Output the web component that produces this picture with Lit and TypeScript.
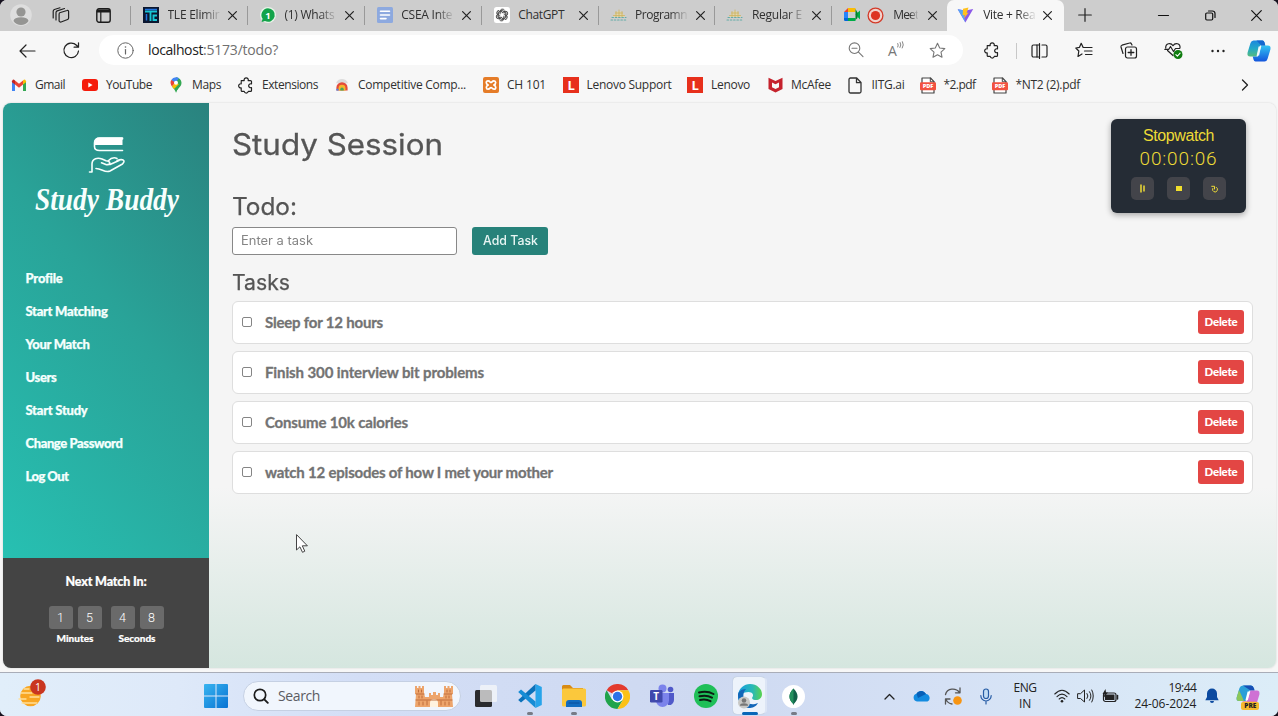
import { LitElement, html, css, svg } from "lit";
import { customElement, property } from "lit/decorators.js";
import { styleMap } from "lit/directives/style-map.js";

/* A one-line label set to a given width, by tracking or by stretching. */
@customElement("fit-label")
class FitLabel extends LitElement {
  @property({ type: Number }) w = 0;
  @property() text = "";
  @property({ type: Boolean }) stretch = false;
  static styles = css`
    :host { display: block; white-space: pre; flex: none; }
    span { display: inline-block; transform-origin: 0 50%; white-space: pre; }
  `;
  firstUpdated() {
    const s = this.renderRoot.querySelector("span") as HTMLElement;
    const natural = s.getBoundingClientRect().width;
    if (!this.w || !natural) return;
    if (this.stretch) s.style.transform = `scaleX(${this.w / natural})`;
    else s.style.letterSpacing = `${(this.w - natural) / this.text.length}px`;
    this.style.width = `${this.w}px`;
  }
  render() { return html`<span>${this.text}</span>`; }
}

const label = (text: string, w: number) => html`<fit-label .text=${text} .w=${w}></fit-label>`;
const wide = (text: string, w: number) => html`<fit-label .text=${text} .w=${w} .stretch=${true}></fit-label>`;
const icon = (w: number, h: number, vb: string, body: unknown) =>
  html`<svg width=${w} height=${h} viewBox=${vb} fill="none" stroke-linecap="round" stroke-linejoin="round">${body}</svg>`;

const puzzle = svg`<path d="M3.2 3.6h3a2.1 2.1 0 1 1 4 0h2.3a1 1 0 0 1 1 1v2.200h-.4a2 2 0 1 0 0 3.900h.4v2.700a1 1 0 0 1-1 1h-2.200a2.1 2.1 0 0 1-4.100 0h-2a1 1 0 0 1-1-1v-2.500a2.1 2.1 0 1 1 0-4.100V4.600" stroke="#222" stroke-width="1.200"/>`;
const cross = icon(9, 9, "0 0 9 9", svg`<path d="M.6.6l7.8 7.8M8.4.6L.6 8.4" stroke="#222" stroke-width="1.2"/>`);
const bridge = icon(18, 12, "0 0 18 12", svg`<path d="M3 8Q9-4 15 8z" fill="#e0d6b0"/><path d="M3.500 6.500h11M5.500 4h7M6 2.500V8M9 1v7M12 2.500V8" stroke="#cdb25f" stroke-width=".8"/><path d="M2 8.500h14M1 11h16" stroke="#63aca8" stroke-width="1.100" stroke-dasharray="1.500 1.800"/>`);
const whats = icon(16, 16, "0 0 16 16", svg`<circle cx="8" cy="8" r="8" fill="#e8f4e9"/><path d="M8 1.2a6.8 6.8 0 1 1-3 12.9L1.6 15l1-3.2A6.8 6.8 0 0 1 8 1.2z" fill="#13a34a"/><text x="8" y="11.6" text-anchor="middle" font-size="9.5" font-weight="700" fill="#fff" font-family="Open Sans, sans-serif">1</text>`);
const tle = icon(16, 16, "0 0 16 16", svg`<path d="M0 0h16v16H0z" fill="#0b1730"/><path d="M2 4.500h5.500V14M7.500 4.500H14M14 8.500h-3.500V13H14" stroke="#18c6d4" stroke-width="1.900" stroke-linecap="butt" stroke-linejoin="miter"/><path d="M2 2.500h12M3.500 7v6.500" stroke="#2374e0" stroke-width="1.500" stroke-linecap="butt"/>`);
const docs = icon(16, 16, "0 0 16 16", svg`<rect width="16" height="16" rx="1.5" fill="#8da9df"/><path d="M3.5 4.2h9M3.5 8h9M3.5 11.6h5.5" stroke="#fff" stroke-width="1.6"/>`);
const gpt = icon(16, 16, "0 0 16 16", svg`<rect width="16" height="16" rx="2.5" fill="#fff"/><g stroke="#444" stroke-width=".95">${[0, 60, 120, 180, 240, 300].map(a => svg`<path transform="rotate(${a} 8 8)" d="M6.1 6.9V4.3a2.4 2.4 0 0 1 4.3-1.3M6.1 5.2l2.7-1.5 3.2 1.9"/>`)}</g>`);
const meet = icon(17, 14, "0 0 17 14", svg`<path d="M0 4l4-4v4z" fill="#ea4335"/><path d="M4 0h7.5v4H4z" fill="#fbbc04"/><path d="M0 4h4v6H0z" fill="#2684fc"/><path d="M0 10h4v3H1.2A1.2 1.2 0 0 1 0 11.8z" fill="#0066da"/><path d="M4 10h7.5v3H4zM11.5 6.5L16 2.5v9z" fill="#00ac47"/><path d="M11.5 1v11l2-2V4.5z" fill="#00832d"/>`);
const rec = icon(17, 17, "0 0 17 17", svg`<circle cx="8.5" cy="8.5" r="7.4" fill="#f1d3cd" stroke="#d33a28" stroke-width="1.3"/><circle cx="8.5" cy="8.5" r="4.6" fill="#dd3422"/>`);
const vite = icon(17, 16, "0 0 17 16", svg`<path d="M.7 2.2L8.4 15.4 16.2 2 8.6 3.4z" fill="#8c59e8"/><path d="M.7 2.2L8.4 15.4 6 3.2z" fill="#57a6f5"/><path d="M11.5.5L6 1.7l-.3 6.6 2-.4-.6 3.4 4.6-5.8-2 .4z" fill="#ffc21e"/>`);

const tabs = [
  { icon: tle, text: "TLE Elimir", w: 52 }, { icon: whats, text: "(1) Whats", w: 50 },
  { icon: docs, text: "CSEA Inte", w: 51 }, { icon: gpt, text: "ChatGPT", w: 46, plain: true },
  { icon: bridge, text: "Programn", w: 52 }, { icon: bridge, text: "Regular E", w: 50 },
];

const lenovo = icon(16, 16, "0 0 16 16", svg`<path d="M0 0h16v16H0z" fill="#e7301c"/><text x="8.2" y="12.6" text-anchor="middle" font-size="13" font-weight="700" fill="#fff" font-family="Open Sans, sans-serif">L</text>`);
const pdf = icon(16, 17, "0 0 16 17", svg`<path d="M2 1h8.5L14 4.6V16H2z" fill="#fff" stroke="#444" stroke-width="1.2"/><path d="M10.3 1v3.8H14" stroke="#444"/><rect x="0" y="5.2" width="16" height="8" rx="1" fill="#f2513f"/><text x="8" y="11.3" text-anchor="middle" font-size="5.6" font-weight="800" fill="#fff" font-family="Open Sans, sans-serif">PDF</text>`);
const bookmarks = [
  { at: 11, t: "Gmail", w: 30, i: icon(16, 12, "0 0 16 12", svg`<path d="M1 2.5V12h3V5z" fill="#4285f4"/><path d="M12 5v7h3V2z" fill="#34a853"/><path d="M4 1.5l4 3.2 4-3.2v4L8 8.7 4 5.5z" fill="#ea4335"/><path d="M1 2.3Q1.7-.6 4 1.5v4L1 3.2z" fill="#c5221f"/><path d="M15 2.3Q14.3-.6 12 1.5v4l3-2.3z" fill="#fbbc04"/>`) },
  { at: 82, t: "YouTube", w: 46, i: icon(16, 12, "0 0 16 12", svg`<rect width="16" height="12" rx="3" fill="#f51b0b"/><path d="M6.3 3.5v5l4.3-2.5z" fill="#fff"/>`) },
  { at: 168, t: "Maps", w: 29, i: icon(16, 16, "0 0 16 16", svg`<path d="M8 .3a5.5 5.5 0 0 1 5.5 5.5C13.5 10 9.500 11 8 15.700Z" fill="#34a853"/><path d="M8 .3A5.500 5.500 0 0 0 3.200 3L7 6.500 11 1.200A5.500 5.500 0 0 0 8 .3z" fill="#4285f4"/><path d="M3.200 3C2 5 2.500 7.500 4 9.500L7.500 5.500z" fill="#ea4335"/><path d="M4 9.500C6 12 7 13 8 15.700c.5-1.700 1-2.700 2-4L13 7 9 6.500z" fill="#34a853"/><path d="M4 9.500L7 6l4 1-5 5z" fill="#fbbc04"/><circle cx="8" cy="5.700" r="2" fill="#fff"/>`) },
  { at: 238, t: "Extensions", w: 56, i: icon(16, 17, "0 0 16 17", puzzle) },
  { at: 334, t: "Competitive Comp...", w: 108, i: icon(14, 14, "0 0 15 14", svg`<path d="M1 5q2-4.500 6.500-4.500T14 5z" fill="#dcdcdc"/><path d="M1.500 13v-3a6 6 0 0 1 12 0v3z" fill="#e44b3b"/><path d="M3.800 13v-2.500a3.700 3.700 0 0 1 7.400 0V13z" fill="#f5b52d"/><path d="M5.700 13v-1.500a1.800 1.800 0 0 1 3.600 0V13z" fill="#49a55e"/><path d="M1.500 11h2.300v2H1.500z" fill="#4d83e6"/>`) },
  { at: 483, t: "CH 101", w: 39, i: icon(16, 16, "0 0 16 16", svg`<rect width="16" height="16" rx="2" fill="#e57c28"/><path d="M5.200 8C2.500 7 2.800 3.800 5 3.800S7 5.500 8 5.500s1-1.700 3-1.700S13.500 7 10.800 8c2.700 1 2.400 4.200.2 4.200S9 10.500 8 10.500s-1 1.700-3 1.700S2.500 9 5.200 8z" stroke="#fff" stroke-width="1.700"/>`) },
  { at: 562.5, t: "Lenovo Support", w: 85, i: lenovo },
  { at: 687, t: "Lenovo", w: 39, i: lenovo },
  { at: 767, t: "McAfee", w: 40, i: icon(15, 16, "0 0 15 16", svg`<path d="M.5.8L7.500 4l7-3.200v11.300L7.500 15.500l-7-3.400z" fill="#c5222d"/><path d="M4 5.500L7.500 7.200 11 5.500v4.800L7.500 12 4 10.300z" fill="#f7f7f7"/>`) },
  { at: 847.5, t: "IITG.ai", w: 33, i: icon(15, 17, "0 0 15 17", svg`<path d="M2.200 1h6.500L13 5.500V14.500A1.500 1.500 0 0 1 11.500 16h-9A1.500 1.500 0 0 1 1 14.500v-12A1.500 1.500 0 0 1 2.500 1zM8.500 1v4.700H13" stroke="#333" stroke-width="1.300"/>`) },
  { at: 919.5, t: "*2.pdf", w: 32, i: pdf },
  { at: 991.5, t: "*NT2 (2).pdf", w: 64.5, i: pdf },
];

const star = "M8.500 1.300l2.200 4.700 5.100.6-3.800 3.500 1 5.100-4.500-2.500L4 15.200l1-5.100L1.200 6.600 6.300 6z";
const copilot = (s: number) => icon(s, s, "0 0 24 24", svg`
  <defs><linearGradient id="ca" x1="0" y1="0" x2="0" y2="1"><stop stop-color="#1b87df"/><stop offset=".5" stop-color="#22a8c8"/><stop offset="1" stop-color="#56bc7e"/></linearGradient>
  <linearGradient id="cb" x1="0" y1="0" x2="0" y2="1"><stop stop-color="#32c4f3"/><stop offset="1" stop-color="#1455dc"/></linearGradient></defs>
  <path d="M6.500 1.500h9q1.500 0 2 2l.8 3h-5.200L9.500 17.500H3.200Q-.3 17.500.6 13.500L3.500 4q.8-2.500 3-2.500z" fill="url(#ca)"/>
  <path d="M17.500 22.500h-9q-1.500 0-2-2l-.8-3h5.200L14.500 6.500h6.300q3.500 0 2.600 4L20.500 20q-.8 2.500-3 2.500z" fill="url(#cb)"/>
  <path d="M6.500 1.500h9q1.500 0 2 2l.8 3h-4L9.500 1.500z" fill="#1467cf"/><path d="M14 7.500h-2.400L9.700 16.500h2.400z" fill="#eff9fb"/>`);

const toolIcons = [
  icon(17, 18, "0 0 17 18", puzzle),
  icon(17, 16, "0 0 17 16", svg`<path d="M6 2H2.500A1.500 1.500 0 0 0 1 3.500v9A1.500 1.500 0 0 0 2.500 14H6zM11 2h3.500A1.500 1.500 0 0 1 16 3.500v9a1.500 1.500 0 0 1-1.500 1.500H11M8.500.5v15" stroke="#222" stroke-width="1.200"/><path d="M6 2h2.500M6 14h2.500" stroke="#222" stroke-width="1.200"/>`),
  icon(18, 17, "0 0 18 17", svg`<path d="M10 5.500L8 5.300 6.200 1.300 4.500 5.300.8 6 3.800 9 3 14.500l4-2.500M6.200 1.300L8.200 5.500M10.500 5.500H17M9.500 9H17M10.500 12.500H17" stroke="#222" stroke-width="1.200"/>`),
  icon(18, 17, "0 0 18 17", svg`<path d="M12 3l-.5-1A1.500 1.500 0 0 0 9.600 1L2 3.200A1.500 1.500 0 0 0 1 5l2 6.500" stroke="#222" stroke-width="1.200"/><rect x="5.500" y="5" width="11" height="11" rx="2" stroke="#222" stroke-width="1.200"/><path d="M11 7.700v5.600M8.200 10.500h5.600" stroke="#222" stroke-width="1.300"/>`),
  icon(19, 18, "0 0 19 18", svg`<path d="M9 13.500L3.500 8.500M1.700 6C1.500 1 7 .500 9 3.700 11 .5 16.500 1 16 6M.8 7.300h4L6.500 4.500l3 5 2-3h4" stroke="#222" stroke-width="1.200"/><circle cx="14" cy="12.500" r="4.500" fill="#107c10"/><path d="M11.900 12.600l1.500 1.500 2.700-2.900" stroke="#fff" stroke-width="1.100"/>`),
  icon(16, 4, "0 0 16 4", svg`<g fill="#222"><circle cx="2.500" cy="2" r="1.200"/><circle cx="8" cy="2" r="1.200"/><circle cx="13.500" cy="2" r="1.200"/></g>`),
];

const taskApps = [
  { i: icon(24, 24, "0 0 24 24", svg`<rect x="1" y="6" width="17" height="17" rx="1.500" fill="#2a2b2e"/><rect x="6" y="1" width="17" height="17" rx="1.500" fill="#fafafa" opacity=".7"/>`) },
  { i: icon(26, 26, "0 0 26 26", svg`<path d="M18.500 1L24.800 4v18l-6.300 3z" fill="#27a4ea"/><path d="M18.500 1v6.500L4 19.500 1.200 17z" fill="#0b71ba"/><path d="M18.500 25v-6.500L4 6.500 1.200 9z" fill="#168cd5"/>`), dot: true },
  { i: icon(26, 24, "0 0 26 24", svg`<path d="M1 2.500A1.500 1.500 0 0 1 2.500 1H9l3 3h10v5H1z" fill="#d88b14"/><rect x="1" y="4.500" width="24" height="18" rx="1.500" fill="#fbc83c"/><path d="M5 23v-4a3 3 0 0 1 3-3h10a3 3 0 0 1 3 3v4z" fill="#126cc0"/><path d="M8 19h10" stroke="#0b4f9a"/>`), dot: true },
  { i: icon(25, 25, "0 0 24 24", svg`<path d="M12 12L1.600 6A12 12 0 0 1 22.400 6H12z" fill="#e33b2e"/><path d="M12 12l-5.200 3L1.600 6A12 12 0 0 0 12 24l5.200-9z" fill="#20a34b"/><path d="M12 6h10.400A12 12 0 0 1 12 24l5.200-9z" fill="#fbc116"/><circle cx="12" cy="12" r="5.700" fill="#fff"/><circle cx="12" cy="12" r="4.500" fill="#2b72e8"/>`) },
  { i: icon(26, 24, "0 0 26 24", svg`<circle cx="21.500" cy="5.500" r="2.800" fill="#5059c9"/><path d="M17 9h8v7a5 5 0 0 1-6 5z" fill="#5059c9"/><circle cx="13.500" cy="4.500" r="4" fill="#7b83eb"/><path d="M7 9h13v7.500a6.500 6.500 0 0 1-13 0z" fill="#7b83eb"/><rect x="1" y="6" width="12.500" height="12.500" rx="1.200" fill="#4049ad"/><text x="7.200" y="15.800" text-anchor="middle" font-size="10" font-weight="700" fill="#fff" font-family="Open Sans, sans-serif">T</text>`) },
  { i: icon(24, 24, "0 0 24 24", svg`<circle cx="12" cy="12" r="12" fill="#1fbf58"/><path d="M5 8.500q8-2.200 14.500 1.500M5.500 12.300q7-1.800 12.500 1.300M6 16q6-1.300 10.500 1.200" stroke="#0c1d13" stroke-width="2"/>`) },
  { i: icon(26, 26, "0 0 26 26", svg`<defs><linearGradient id="eg"><stop stop-color="#169ee0"/><stop offset=".6" stop-color="#29b8b7"/><stop offset="1" stop-color="#59d34c"/></linearGradient></defs><path d="M1 12C2 5 7 1 13 1c7 0 12 5 12 10 0 4-3 6-6 6-3.500 0-4.500-1.500-3.500-3 1.500-2 0-5-4-5C6 9 3 12 1 18z" fill="url(#eg)"/><path d="M1 12c0-3 3-6 8-6-3 3-3 7-2 10 1.500 4 7 7 14 4-2 4-6 5-9 5C5 25 1 19 1 12z" fill="#1266b8"/><circle cx="7" cy="19.500" r="6" fill="#c8c8c6"/><circle cx="7" cy="17.500" r="2.300" fill="#777"/><path d="M3 22.300a4 2 0 0 1 8 0v.5H3z" fill="#777"/>`), active: true },
  { i: icon(23, 23, "0 0 23 23", svg`<circle cx="11.500" cy="11.500" r="11.500" fill="#fff"/><path d="M11.500 3.500q8 8 .3 15.500l-.1 1h-.4l-.1-1Q3.500 11.500 11.500 3.500z" fill="#116149"/><path d="M11.500 3.500v15.500Q3.500 12 11.500 3.500z" fill="#23905e"/>`), dot: true },
];

@customElement("browser-chrome")
class BrowserChrome extends LitElement {
  static styles = css`
    :host { display: block; font: 12px/16px "Open Sans", "Noto Sans", sans-serif; color: #303030; }
    svg { display: block; flex: none; overflow: visible; }
    .strip { display: flex; height: 31px; background: #cdcdcd; }
    .lead { width: 130px; display: flex; align-items: center; padding-left: 10px; box-sizing: border-box; padding-bottom: 1px; }
    .lead svg:nth-child(2) { margin-left: 20px; }
    .lead svg:nth-child(3) { margin-left: 26px; }
    .tab { width: 116.9px; box-sizing: border-box; display: flex; align-items: center; padding-left: 12px; position: relative; padding-bottom: 1px; }
    .tab::before { content: ""; position: absolute; left: 0; top: 6px; width: 1px; height: 19px; background: #999; }
    .tab .glyph { width: 18px; display: flex; justify-content: center; }
    .tab .cap { margin-left: 7.500px; width: 52px; overflow: hidden; }
    .fade { -webkit-mask-image: linear-gradient(90deg, #000 68%, rgba(0,0,0,.1)); mask-image: linear-gradient(90deg, #000 68%, rgba(0,0,0,.1)); }
    .tab > svg { margin-left: 8.500px; }
    .tab.meet .cap { width: 25px; margin-left: 9px; }
    .tab.meet .recbox { margin-left: 6px; }
    .tab.meet > .x { margin-left: 10px; }
    .tab.on { background: #f7f7f7; border-radius: 7px 7px 0 0; width: 117px; padding-left: 9px; margin-left: -1px; }
    .tab.on::before { display: none; }
    .tab.on .cap { margin-left: 9px; }
    .tab.on > svg { margin-left: 8px; }
    .win { display: flex; flex: 1; align-items: center; padding-bottom: 1px; }
    .plus { width: 42px; display: grid; place-items: center; }
    .wins { display: flex; margin-left: auto; }
    .wins div { width: 46px; display: grid; place-items: center; }
    .wins div:first-child { padding-right: 2px; width: 44px; }
    .wins div:nth-child(2) { padding-right: 2px; }
    .wins div:last-child { width: 43px; }
    .tools { display: flex; height: 39px; background: #f7f7f7; align-items: center; }
    .cell { width: 44.500px; height: 38px; display: grid; place-items: center; flex: none; }
    .first { padding-left: 5px; }
    .url { width: 864px; height: 30px; margin: 0 7px 0 5px; border-radius: 15px; background: #fff; display: flex; align-items: center; box-sizing: border-box; padding: 0 17px; font-size: 14px; flex: none; margin-top: -1px; padding-left: 18px; }
    .host { color: #222; margin-left: 14px; }
    .path { color: #707070; }
    .acts { margin-left: auto; display: flex; gap: 24px; align-items: center; }
    .bar { width: 1px; height: 16px; background: #c8c8c8; margin: 0 0 0 1px; }
    .split { margin-left: 1px; }
    .cop { width: 38px; }
    .marks { display: flex; height: 33px; background: #f7f7f7; align-items: center; padding-left: 11px; box-sizing: border-box; }
    .mark { display: flex; align-items: center; flex: none; height: 26px; margin-top: -3px; }
    .pic { width: 16px; display: grid; place-items: center; margin-right: 8px; }
    .more { margin: -3px 29px 0 auto; }
  `;
  render() {
    return html`
      <div class="strip">
        <div class="lead">
          ${icon(22, 22, "0 0 22 22", svg`<circle cx="11" cy="11" r="10.800" fill="#dedede"/><circle cx="11" cy="8" r="4.600" fill="#959593"/><path d="M3.500 17a7.500 3.800 0 0 1 15 0 9 9 0 0 1-15 0z" fill="#959593"/>`)}
          ${icon(18, 17, "0 0 18 17", svg`<path d="M8.500 5.500l6.500-2a1.200 1.200 0 0 1 1.600 1v6.500a1.500 1.500 0 0 1-1 1.500l-6.500 2.500a1.500 1.500 0 0 1-2-1.300V7a1.500 1.500 0 0 1 1.400-1.500M4 13V5.500a2 2 0 0 1 1.200-1.600L12.500 1.500M1.200 11V4A2 2 0 0 1 2.400 2.500L8 .8" stroke="#222" stroke-width="1.200"/>`)}
          ${icon(15, 15, "0 0 15 15", svg`<rect x=".8" y=".8" width="13.400" height="13.400" rx="2.200" stroke="#1b1b1b" stroke-width="1.400"/><path d="M1 1.500h13v3H1z" fill="#1b1b1b"/><path d="M4.800 4v10" stroke="#1b1b1b" stroke-width="1.200"/>`)}
        </div>
        ${tabs.map(t => html`<div class="tab"><div class="glyph">${t.icon}</div><div class="cap ${t.plain ? "" : "fade"}">${label(t.text, t.w)}</div>${cross}</div>`)}
        <div class="tab meet"><div class="glyph">${meet}</div><div class="recbox">${rec}</div><div class="cap fade">${label("Meet", 25)}</div><div class="x">${cross}</div></div>
        <div class="tab on"><div class="glyph">${vite}</div><div class="cap fade">${label("Vite + Rea", 52)}</div>${cross}</div>
        <div class="win">
          <div class="plus">${icon(14, 14, "0 0 14 14", svg`<path d="M7 .7v12.600M.7 7h12.600" stroke="#222" stroke-width="1.200"/>`)}</div>
          <div class="wins">
            <div>${icon(11, 3, "0 0 11 3", svg`<path d="M.5 1.500h10" stroke="#111" stroke-width="1.200"/>`)}</div>
            <div>${icon(11, 11, "0 0 11 11", svg`<rect x=".7" y="3" width="7" height="7" rx="1.200" stroke="#111" stroke-width="1.200"/><path d="M3.500 1h4A2.500 2.500 0 0 1 10 3.500v4" stroke="#111" stroke-width="1.200"/>`)}</div>
            <div>${icon(11, 11, "0 0 11 11", svg`<path d="M.7.7l9.600 9.600M10.300.7L.7 10.300" stroke="#111" stroke-width="1.200"/>`)}</div>
          </div>
        </div>
      </div>
      <div class="tools">
        <div class="cell first">${icon(17, 14, "0 0 17 14", svg`<path d="M16 7H1M7 1L1 7l6 6" stroke="#222" stroke-width="1.200"/>`)}</div>
        <div class="cell">${icon(17, 17, "0 0 17 17", svg`<path d="M15.500 9A7.300 7.300 0 1 1 13.500 3.300L15.200 5M15.500.8v4.400h-4.400" stroke="#222" stroke-width="1.250"/>`)}</div>
        <div class="url">
          ${icon(17, 17, "0 0 17 17", svg`<circle cx="8.500" cy="8.500" r="7.700" stroke="#666"/><path d="M8.500 7.500V12" stroke="#666" stroke-width="1.200"/><circle cx="8.500" cy="5" r=".8" fill="#666"/>`)}
          <div class="host">${label("localhost", 55)}</div><div class="path">${label(":5173/todo?", 75)}</div>
          <div class="acts">
            ${icon(16, 16, "0 0 16 16", svg`<circle cx="6.500" cy="6.200" r="5.300" stroke="#777" stroke-width="1.100"/><path d="M10.500 10.200l4.500 4.500M4 6.200h5" stroke="#777" stroke-width="1.100"/>`)}
            ${icon(17, 18, "0 -1 17 18", svg`<path d="M9.800 5q1-2 0-3.500M12 5.500q1.700-2.500.2-5M14.300 6q2-3 .2-6.300" stroke="#777" stroke-width=".9"/><text x="0" y="13.500" font-size="14" fill="#777" font-family="Open Sans, sans-serif">A</text>`)}
            ${icon(17, 17, "0 0 17 17", svg`<path d=${star} stroke="#777" stroke-width="1.100"/>`)}
          </div>
        </div>
        <div class="cell">${toolIcons[0]}</div><div class="bar"></div>
        <div class="cell split">${toolIcons[1]}</div>
        ${toolIcons.slice(2).map(i => html`<div class="cell">${i}</div>`)}
        <div class="cell cop">${copilot(24)}</div>
      </div>
      <div class="marks">
        ${bookmarks.map((b, n) => html`<div class="mark" style=${styleMap({ width: `${(bookmarks[n + 1]?.at ?? 1100) - b.at}px` })}><div class="pic">${b.i}</div>${label(b.t, b.w)}</div>`)}
        <div class="more">${icon(8, 12, "0 0 8 12", svg`<path d="M1.500 1l5 5-5 5" stroke="#222" stroke-width="1.300"/>`)}</div>
      </div>`;
  }
}

@customElement("study-page")
class StudyPage extends LitElement {
  static styles = css`
    :host { display: flex; height: 565px; margin: 0 2px 0 3px; border-radius: 8px; overflow: hidden; position: relative; background: linear-gradient(#f5f5f5 0, #f5f5f5 68%, #d5e6df 100%); color: #555; box-shadow: 0 0 2px #ccc; }
    svg { display: block; overflow: visible; }
    .side { width: 206px; display: flex; flex-direction: column; flex: none; }
    .nav { height: 455px; box-sizing: border-box; background: linear-gradient(50deg, #27c0b2, #29a398 55%, #2a827e); color: #f5fffd; padding: 33px 0 0 22.500px; font: 900 13px/33px Lato, sans-serif; -webkit-text-stroke: .25px currentColor; }
    .logo { height: 126px; -webkit-text-stroke: 0; }
    .timer { flex: 1; background: #444; color: #fff; font: 900 12.500px/16px Lato, sans-serif; display: flex; flex-direction: column; align-items: center; padding-top: 16px; -webkit-text-stroke: .2px currentColor; }
    .groups { display: flex; gap: 9px; margin-top: 16px; }
    .group { font-size: 10px; line-height: 18px; display: flex; flex-direction: column; align-items: center; }
    .digits { display: flex; gap: 5px; }
    .digit { width: 24px; height: 23px; border-radius: 3px; background: #6a6a6a; display: grid; place-items: center; font: 300 12.500px/23px Roboto, sans-serif; -webkit-text-stroke: 0; }
    .main { flex: 1; padding: 24px 23px 0 23px; font-family: Inter, "Open Sans", sans-serif; }
    .h1 { font-size: 29.500px; line-height: 34px; -webkit-text-stroke: .3px currentColor; }
    .h2 { font-size: 24px; line-height: 30px; margin-top: 31px; -webkit-text-stroke: .25px currentColor; }
    .h3 { font-size: 21px; line-height: 26px; margin: 15px 0 5px; -webkit-text-stroke: .25px currentColor; }
    .form { display: flex; gap: 15px; margin-top: 5px; height: 28px; font-size: 12.500px; line-height: 26px; }
    .input { width: 225px; box-sizing: border-box; border: 1px solid #888; border-radius: 3px; background: #fff; padding-left: 8px; color: #858585; }
    .add { width: 76px; background: #27827a; color: #e8f5f3; border-radius: 3px; display: grid; place-items: center; line-height: 28px; font-weight: 500; }
    .task { display: flex; align-items: center; height: 43px; box-sizing: border-box; border: 1px solid #dedede; border-radius: 6px; background: #fff; margin-bottom: 7px; padding: 0 8px 1px 8.500px; font: 700 15px/20px Lato, sans-serif; color: #737373; }
    .task > fit-label { -webkit-text-stroke: .3px currentColor; margin-top: -1px; }
    .box { width: 10px; height: 10px; box-sizing: border-box; border: 1px solid #858585; border-radius: 2px; margin-right: 13.500px; }
    .del { margin-left: auto; width: 46px; height: 24px; border-radius: 3px; background: #e34644; color: #fff; font: 900 11.500px/24px Lato, sans-serif; display: grid; place-items: center; }
    .watch { position: absolute; right: 30px; top: 16px; width: 135px; height: 94px; box-sizing: border-box; border-radius: 6px; background: #252c35; color: #eedb36; box-shadow: 0 2px 6px #0005; display: flex; flex-direction: column; align-items: center; padding-top: 7px; font: 16px/20px "Liberation Sans", sans-serif; }
    .clock { font: 300 19px/22px Roboto, sans-serif; margin-top: 2px; }
    .btns { display: flex; gap: 13px; margin-top: 7px; }
    .btn { width: 23px; height: 23px; border-radius: 5px; background: #43444a; display: grid; place-items: center; }
    .cursor { position: absolute; left: 292px; top: 431px; }
  `;
  render() {
    const nav: [string, number][] = [["Profile", 37], ["Start Matching", 82], ["Your Match", 64], ["Users", 31], ["Start Study", 62], ["Change Password", 97], ["Log Out", 43]];
    const tasks: [string, number][] = [["Sleep for 12 hours", 118], ["Finish 300 interview bit problems", 219], ["Consume 10k calories", 143], ["watch 12 episodes of how I met your mother", 288]];
    return html`
      <div class="side">
        <div class="nav">
          <div class="logo">${icon(162, 84, "0 0 162 84", svg`
            <path d="M96.500 3v-1H74q-5.500 0-5.500 5v3.500q0 4 5 4h23" stroke="#f7fffd" stroke-width="1.600"/><path d="M73 1.500h23.500v7.500H69V6q0-4.500 4-4.500z" fill="#fff"/>
            <path d="M63.500 36h2.500v-8.500M66 28c0-6 6-6.500 10-5l4 1.800c5 .7 5 4 .5 4l-5-2M84 28.500l9-4M82 25c3-3 6-4 9-2.500M91 24.500c6-2 9 0 5.500 3.500L84 35c-5 2.500-8-2.500-14-2.500" stroke="#f7fffd" stroke-width="1.600"/>
            <text x="9" y="74" font-size="32" font-style="italic" font-weight="700" fill="#f7fffd" textLength="144" lengthAdjust="spacingAndGlyphs" font-family="Z003, 'URW Chancery L', 'Liberation Serif', cursive">Study Buddy</text>`)}</div>
          <div>${nav.map(([t, w]) => label(t, w))}</div>
        </div>
        <div class="timer">
          ${label("Next Match In:", 81)}
          <div class="groups">
            <div class="group"><div class="digits"><div class="digit">1</div><div class="digit">5</div></div>${label("Minutes", 37)}</div>
            <div class="group"><div class="digits"><div class="digit">4</div><div class="digit">8</div></div>${label("Seconds", 37)}</div>
          </div>
        </div>
      </div>
      <div class="main">
        <div class="h1">${wide("Study Session", 211)}</div>
        <div class="h2">${wide("Todo:", 65)}</div>
        <div class="form"><div class="input">${wide("Enter a task", 72)}</div><div class="add">${wide("Add Task", 55)}</div></div>
        <div class="h3">${wide("Tasks", 58)}</div>
        ${tasks.map(([t, w]) => html`<div class="task"><div class="box"></div>${label(t, w)}<div class="del">${label("Delete", 33)}</div></div>`)}
      </div>
      <div class="watch">
        ${label("Stopwatch", 71)}
        <div class="clock">${label("00:00:06", 78)}</div>
        <div class="btns">
          <div class="btn">${icon(8, 9, "0 0 8 9", svg`<path d="M2 .5V8.500M5 1.500v6" stroke="#eedb36" stroke-width="1.500" stroke-linecap="butt"/>`)}</div>
          <div class="btn">${icon(6, 5, "0 0 6 5", svg`<path d="M0 0h6v5H0z" fill="#f2df2c"/>`)}</div>
          <div class="btn">${icon(8, 8, "0 0 8 8", svg`<path d="M5.300 2.300A2.500 2.500 0 1 1 1.700 3.500M.7 1.300h2.800V4" stroke="#eedb36" stroke-width="1"/>`)}</div>
        </div>
      </div>
      <div class="cursor">${icon(14, 20, "0 0 14 20", svg`<path d="M1.500 1v15l3.400-3.200 2.600 5.500 2.300-1.100-2.500-5.400h4.700z" fill="#fff" stroke="#444" stroke-width="1"/>`)}</div>`;
  }
}

@customElement("task-bar")
class TaskBar extends LitElement {
  static styles = css`
    :host { display: flex; height: 44px; box-sizing: border-box; margin-top: 4px; border-top: 1px solid #a9adb8; background: linear-gradient(90deg, #e1eefa, #dee9f9 14%, #d3def6 28%, #ced9f1 55%, #d5e1f5 74%, #dcedf8); align-items: center; font: 12px/16px "Open Sans", "Noto Sans", sans-serif; color: #222; padding-top: 3px; }
    svg { display: block; flex: none; }
    .weather { width: 204px; box-sizing: border-box; padding-left: 18px; margin-top: -6px; }
    .search { margin-left: 14.500px; width: 218px; height: 30px; border: 1px solid #c5d0e3; box-sizing: border-box; border-radius: 15px; background: #f1f6fd; display: flex; align-items: center; padding: 0 6px 0 9px; font-size: 14px; color: #5b5c62; }
    .search .cap { margin-left: 9.500px; }
    .search > svg:last-child { margin-left: auto; }
    .apps { display: flex; margin-left: 3px; }
    .app { width: 44px; height: 40px; display: grid; place-items: center; position: relative; }
    .app svg { z-index: 1; }
    .dot::after { content: ""; position: absolute; left: 19px; bottom: 1px; width: 6px; height: 3px; border-radius: 2px; background: #777b86; }
    .active::before { content: ""; position: absolute; left: 5px; top: 1px; width: 32px; height: 37px; border-radius: 4px; background: #edf3fb; box-shadow: 3px 0 0 -1px #dce5f5, 0 0 1px #9aa; }
    .active::after { content: ""; position: absolute; left: 14px; bottom: 1px; width: 16px; height: 3px; border-radius: 2px; background: #0967b8; z-index: 1; }
    .tray { display: flex; align-items: center; margin-left: 58px; }
    .slot { width: 32px; display: grid; place-items: center; }
    .lang { width: 47px; display: flex; flex-direction: column; align-items: center; }
    .sys { width: 24.300px; display: grid; place-items: center; }
    .sys:nth-child(6) { padding-left: 1px; }
    .date { width: 74px; display: flex; flex-direction: column; align-items: flex-end; }
    .bell { width: 32px; display: grid; place-items: center; }
    .pre { margin-left: 8px; position: relative; }
    .tag { position: absolute; left: 5px; bottom: -2px; width: 18px; height: 8px; border-radius: 2px; background: #f5b92d; font: 800 6.500px/8px "Open Sans", sans-serif; text-align: center; color: #222; }
  `;
  render() {
    const ink = "#222";
    return html`
      <div class="weather">${icon(28, 28, "0 0 28 28", svg`<circle cx="12.500" cy="17" r="10.300" fill="#f8a623"/><path d="M1 20h7M3 14h11M6 10h5M12 18h9M4 24h15" stroke="#ffe09a" stroke-width="1.300"/><circle cx="20" cy="8" r="7.800" fill="#c93620"/><text x="20" y="11.800" text-anchor="middle" font-size="10.500" fill="#fff" font-family="Open Sans, sans-serif">1</text>`)}</div>
      ${icon(24, 24, "0 0 24 24", svg`<defs><linearGradient id="wg" x1="0" y1="0" x2="1" y2="1"><stop stop-color="#38b4f0"/><stop offset="1" stop-color="#0873d3"/></linearGradient></defs><path d="M1 0h10.500v11.500H0V1q0-1 1-1zM12.500 0H23q1 0 1 1v10.500H12.500zM0 12.500h11.500V24H1q-1 0-1-1zM12.500 12.500H24V23q0 1-1 1H12.500z" fill="url(#wg)"/>`)}
      <div class="search">
        ${icon(16, 16, "0 0 16 16", svg`<circle cx="7" cy="7" r="5.700" stroke="#1c1c1c" stroke-width="1.700"/><path d="M11.300 11.300l3.500 3.500" stroke="#1c1c1c" stroke-width="1.900"/>`)}
        <div class="cap">${label("Search", 42)}</div>
        ${icon(40, 24, "0 0 40 24", svg`<path d="M1 23L2 10H1V2h2v2h1.500V2h2v2H8V2h2v7l1 4h4V9h2v2h2V8h3v3h2V9h2v4h3l1-4V2h2v2h1.500V2h2v2H37V2h2v8h-1l1 13z" fill="#eda56c"/><path d="M16 23v-4a4 4 0 0 1 8 0v4z" fill="#fff3df"/><path d="M2 10h8M30 10h8M2 16h36M4.500 6v2M7.500 6v2M33 6v2M36 6v2M5 12v2M8 12v2M32 12v2M35 12v2M5 18v3M9 18v3M31 18v3M35 18v3M13 17v4M27 17v4" stroke="#bb6636" stroke-width=".9"/>`)}
      </div>
      <div class="apps">${taskApps.map(a => html`<div class="app ${a.dot ? "dot" : ""} ${a.active ? "active" : ""}">${a.i}</div>`)}</div>
      <div class="tray">
        <div class="slot">${icon(11, 7, "0 0 11 7", svg`<path d="M1 6l4.500-4.500L10 6" stroke=${ink} stroke-width="1.300"/>`)}</div>
        <div class="slot">${icon(18, 12, "0 0 18 12", svg`<path d="M4 11.500a4 4 0 0 1-.5-7.800A5.500 5.500 0 0 1 13 4a4 4 0 0 1 1.500 7.500z" fill="#138be0"/><path d="M3.500 3.700A5.500 5.500 0 0 1 13 4l-8 4z" fill="#075fb7"/>`)}</div>
        <div class="slot">${icon(19, 19, "0 0 19 19", svg`<path d="M1.500 7.500C3 1 12 .5 15.500 5.500M16 1v4.800h-4.500M1.500 17v-5H6M2 12.500q2 4 6 4.500" stroke="#555" stroke-width="1.300"/><circle cx="13.500" cy="13.500" r="4.300" fill="#f79513"/>`)}</div>
        <div class="slot">${icon(12, 17, "0 0 12 17", svg`<rect x="3.500" y="1" width="5" height="9.500" rx="2.500" fill="#c0dcf5" stroke="#265ca5" stroke-width="1.200"/><path d="M.8 7.500a5.200 5.500 0 0 0 10.400 0M6 13v3" stroke="#265ca5" stroke-width="1.200"/>`)}</div>
        <div class="lang">${label("ENG", 23)}${label("IN", 12)}</div>
        <div class="sys">${icon(16, 14, "0 0 16 14", svg`<path d="M.8 5q7.200-7.500 14.400 0M3 7.700q5-5 10 0M5.200 10q2.800-2.800 5.600 0" stroke=${ink} stroke-width="1.100"/><circle cx="8" cy="12.200" r="1.300" fill=${ink}/>`)}</div>
        <div class="sys">${icon(17, 14, "0 0 17 14", svg`<path d="M1 4.700h2.500L7.500 1v12L3.500 9.500H1zM10 4.500q2 2.500 0 5M12.500 2.700q3 4.300 0 8.600M14.800 1q3 6 0 12" stroke=${ink} stroke-width="1"/>`)}</div>
        <div class="sys">${icon(17, 14, "0 0 17 14", svg`<rect x="1.500" y="4" width="12.500" height="8.500" rx="2" stroke=${ink} stroke-width="1.200"/><rect x="3" y="5.500" width="9.500" height="5.500" fill=${ink}/><path d="M15.500 6.500v3.500" stroke=${ink} stroke-width="1.500"/><path d="M3.500 0L.5 5h2L1.500 9 6 3.500H4z" fill=${ink}/>`)}</div>
        <div class="date">${label("19:44", 28)}${label("24-06-2024", 62)}</div>
        <div class="bell">${icon(14, 16, "0 0 14 16", svg`<path d="M7 .5a5 5 0 0 1 5 5V9l1.700 3.300H.3L2 9V5.500a5 5 0 0 1 5-5zM5 13h4a2 2 0 0 1-4 0z" fill="#0b4aa0"/>`)}</div>
        <div class="pre">${icon(24, 24, "0 0 24 24", svg`<path d="M7 1.500h8q2 0 3 3l.5 2h-5L9.500 17H3Q0 17 .7 13.500L3.500 4q.8-2.500 3.500-2.500z" fill="#2a9fd8"/><path d="M7 1.500h8q2 0 3 3l.5 2h-4z" fill="#174fb5"/><path d="M.7 13.500L3 6l5 11H3Q0 17 .7 13.500z" fill="#8bc75a"/><path d="M17.500 22.500h-9l-2-5H11l3.500-11H21q3 0 2.400 4L20.500 20z" fill="#cf71d4"/><path d="M6.500 17.500H20l-2.500 5h-9z" fill="#f18c75"/><path d="M14 7.500h-2.400L9.500 16h2.400z" fill="#fff"/>`)}<div class="tag">PRE</div></div>
      </div>`;
  }
}

@customElement("app-root")
class AppRoot extends LitElement {
  static styles = css`
    :host { display: block; width: 1278px; height: 716px; overflow: hidden; background: #17121f; }
    .screen { height: 716px; border-radius: 7px; overflow: hidden; background: #f7f7f7; }
  `;
  render() { return html`<div class="screen"><browser-chrome></browser-chrome><study-page></study-page><task-bar></task-bar></div>`; }
}
